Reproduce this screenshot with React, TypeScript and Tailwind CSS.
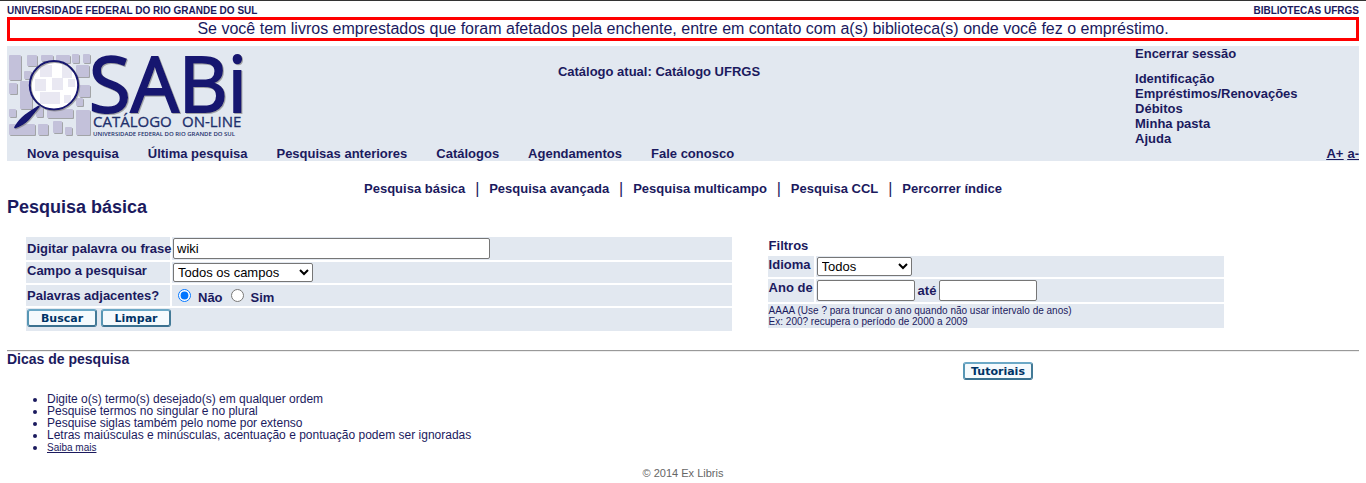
import { useState } from "react";

const mainLinks = [
  "Nova pesquisa",
  "Última pesquisa",
  "Pesquisas anteriores",
  "Catálogos",
  "Agendamentos",
  "Fale conosco",
];

const userLinks = ["Identificação", "Empréstimos/Renovações", "Débitos", "Minha pasta", "Ajuda"];

const searchModes = [
  "Pesquisa básica",
  "Pesquisa avançada",
  "Pesquisa multicampo",
  "Pesquisa CCL",
  "Percorrer índice",
];

const tips = [
  "Digite o(s) termo(s) desejado(s) em qualquer ordem",
  "Pesquise termos no singular e no plural",
  "Pesquise siglas também pelo nome por extenso",
  "Letras maiúsculas e minúsculas, acentuação e pontuação podem ser ignoradas",
];

// x, y, width, height
const tiles = [
  [2, 5, 12, 25],
  [20, 5, 10, 11],
  [34, 5, 12, 6],
  [49, 5, 14, 8],
  [65, 4, 7, 9],
  [76, 4, 7, 9],
  [69, 15, 13, 12],
  [17, 21, 7, 8],
  [2, 33, 8, 11],
  [13, 31, 12, 28],
  [72, 35, 11, 12],
  [69, 48, 7, 8],
  [2, 59, 7, 8],
  [29, 57, 7, 10],
  [40, 59, 26, 9],
  [2, 74, 26, 11],
  [31, 74, 10, 11],
  [46, 71, 9, 12],
  [58, 77, 7, 8],
  [69, 60, 14, 25],
];

const lensTiles = [
  [33, 15, 12, 12],
  [55, 14, 10, 14],
  [28, 29, 11, 12],
  [45, 28, 11, 12],
  [61, 29, 7, 8],
  [33, 42, 20, 12],
  [57, 45, 7, 8],
];

function Logo() {
  return (
    <svg className="font-normal" width="240" height="90" viewBox="0 0 240 90" role="img" aria-label="SABi">
      <filter id="shadow">
        <feDropShadow dx="1" dy="1" stdDeviation="0.7" floodColor="#777" floodOpacity="0.6" />
      </filter>
      <g fill="#c3c1da" filter="url(#shadow)">
        {tiles.map(([x, y, w, h], i) => (
          <rect key={i} x={x} y={y} width={w} height={h} rx="1" />
        ))}
      </g>
      <circle cx="47" cy="35.3" r="24.2" fill="#fff" />
      <g fill="#e9e8f2">
        {lensTiles.map(([x, y, w, h], i) => (
          <rect key={i} x={x} y={y} width={w} height={h} />
        ))}
      </g>
      <g filter="url(#shadow)">
        <circle cx="47" cy="35.3" r="24.2" fill="none" stroke="#14136f" strokeWidth="2" />
        <path d="M31.5 55.5 L33 56.5 Q27 64 22 70 Q16 76 8 78.5 Q6.500 78 7.500 76.500 Q12 69 18 64.500 Q25 59.500 31.500 55.500Z" fill="#14136f" />
        <text x="82" y="62" fontFamily="'Open Sans', sans-serif" fontSize="76" fill="#14136f" stroke="#14136f" strokeWidth="2">
          SABi
        </text>
      </g>
      <g fontFamily="'Open Sans', sans-serif" fill="#1d2f6b">
        <text x="86" y="77" fontSize="15" stroke="#1d2f6b" strokeWidth="0.3">CATÁLOGO</text>
        <text x="175" y="77" fontSize="15" stroke="#1d2f6b" strokeWidth="0.3">ON-LINE</text>
        <text x="86" y="86" fontSize="6" fontWeight="600">UNIVERSIDADE FEDERAL DO RIO GRANDE DO SUL</text>
      </g>
    </svg>
  );
}

function ImageButton({ label, type = "button", onClick }: { label: string; type?: "button" | "submit"; onClick?: () => void }) {
  return (
    <button
      type={type}
      onClick={onClick}
      className="h-[18px] w-[70px] rounded-[3px] border-2 border-t-[#6ba8c6] border-l-[#5796b4] border-r-[#437a97] border-b-[#3b7190] bg-[#f5fafd] font-['DejaVu_Sans',sans-serif] text-[11px] leading-[13px] font-bold text-[#003366]"
    >
      {label}
    </button>
  );
}

export default function App() {
  const [query, setQuery] = useState("wiki");
  const [adjacent, setAdjacent] = useState("N");

  return (
    <div className="border-t border-[#333] bg-white px-[7px] font-['Liberation_Sans',Arial,sans-serif] text-[13px] leading-[15px] text-[#1b1a5e]">
      <div className="flex justify-between pt-1 text-[10px] leading-3 font-bold">
        <span>UNIVERSIDADE FEDERAL DO RIO GRANDE DO SUL</span>
        <span>BIBLIOTECAS UFRGS</span>
      </div>
      <p className="border-3 border-[#f00] text-center text-base leading-[18px]">
        Se você tem livros emprestados que foram afetados pela enchente, entre em contato com a(s) biblioteca(s) onde você fez o empréstimo.
      </p>

      <header className="mt-[5px] bg-[#e2e8f0] font-bold">
        <div className="flex h-[100px]">
          <div className="flex-1 pt-1">
            <Logo />
          </div>
          <p className="pt-[18px] pr-12">Catálogo atual: Catálogo UFRGS</p>
          <div className="flex flex-1 justify-end">
            <ul className="w-[224px]">
              <li className="mb-[10px]"><a href="#">Encerrar sessão</a></li>
              {userLinks.map((link) => (
                <li key={link}><a href="#">{link}</a></li>
              ))}
            </ul>
          </div>
        </div>
        <div className="flex justify-between">
          <nav className="flex gap-[29px] pl-5">
            {mainLinks.map((link) => (
              <a key={link} href="#">{link}</a>
            ))}
          </nav>
          <div className="flex gap-1 underline">
            <a href="#">A+</a>
            <a href="#">a-</a>
          </div>
        </div>
      </header>

      <nav className="mt-5 flex justify-center font-bold">
        {searchModes.map((mode, i) => (
          <div key={mode} className="flex">
            {i > 0 && <span className="w-6 text-center text-base leading-[15px] font-normal">|</span>}
            <a href="#">{mode}</a>
          </div>
        ))}
      </nav>
      <h1 className="text-lg leading-[22px] font-bold">Pesquisa básica</h1>

      <form className="mt-[19px] grid grid-cols-[55%_45%] font-bold" onSubmit={(e) => e.preventDefault()}>
        <div className="mx-[19px] grid grid-cols-[144px_1fr] content-start gap-0.5">
          <label htmlFor="query" className="bg-[#e2e8f0] py-1 pl-px whitespace-nowrap">Digitar palavra ou frase</label>
          <div className="flex bg-[#e2e8f0] p-px">
            <input
              id="query"
              value={query}
              onChange={(e) => setQuery(e.target.value)}
              className="h-[21px] w-[317px] rounded-xs border border-[#767676] bg-white px-[3px] font-normal text-black"
            />
          </div>
          <label htmlFor="field" className="bg-[#e2e8f0] pt-px pl-px">Campo a pesquisar</label>
          <div className="flex bg-[#e2e8f0] p-px">
            <select id="field" className="h-[19px] w-[140px] rounded-xs border border-[#767676] bg-white font-normal text-black">
              <option>Todos os campos</option>
            </select>
          </div>
          <span id="adjacent" className="bg-[#e2e8f0] pt-[3px] pl-px">Palavras adjacentes?</span>
          <div role="radiogroup" aria-labelledby="adjacent" className="flex h-[21px] items-center gap-[7px] bg-[#e2e8f0] pl-1.5">
            <input id="adj-n" type="radio" name="adj" className="size-[13px]" checked={adjacent === "N"} onChange={() => setAdjacent("N")} />
            <label htmlFor="adj-n" className="pt-1">Não</label>
            <input id="adj-s" type="radio" name="adj" className="ml-px size-[13px]" checked={adjacent === "Y"} onChange={() => setAdjacent("Y")} />
            <label htmlFor="adj-s" className="pt-1">Sim</label>
          </div>
          <div className="col-span-2 flex h-[23px] gap-1 bg-[#e2e8f0] p-px">
            <ImageButton label="Buscar" type="submit" />
            <ImageButton label="Limpar" onClick={() => setQuery("")} />
          </div>
        </div>

        <div className="ml-[17px] grid w-3/4 grid-cols-[46px_1fr] content-start gap-0.5">
          <h2 className="col-span-2 p-px">Filtros</h2>
          <label htmlFor="language" className="bg-[#e2e8f0] pt-px pl-px">Idioma</label>
          <div className="flex bg-[#e2e8f0] p-px">
            <select id="language" className="h-[19px] w-[95px] rounded-xs border border-[#767676] bg-white font-normal text-black">
              <option>Todos</option>
            </select>
          </div>
          <label htmlFor="year-from" className="bg-[#e2e8f0] pt-px pl-px whitespace-nowrap">Ano de</label>
          <div className="flex items-center gap-[3px] bg-[#e2e8f0] p-px">
            <input id="year-from" className="h-[21px] w-[98px] rounded-xs border border-[#767676] bg-white px-[3px] font-normal text-black" />
            <label htmlFor="year-to">até</label>
            <input id="year-to" className="h-[21px] w-[98px] rounded-xs border border-[#767676] bg-white px-[3px] font-normal text-black" />
          </div>
          <p className="col-span-2 bg-[#e2e8f0] p-px text-[10px] leading-[11px] font-normal">
            AAAA (Use ? para truncar o ano quando não usar intervalo de anos)
            <br />
            Ex: 200? recupera o período de 2000 a 2009
          </p>
        </div>
      </form>

      <hr className="mt-[19px] border-t border-b border-t-[#999] border-b-[#eee]" />
      <section className="grid grid-cols-[630px_1fr]">
        <div>
          <h2 className="text-sm leading-[15px] font-bold">Dicas de pesquisa</h2>
          <ul className="mt-[26px] list-disc pl-10 text-xs leading-3">
            {tips.map((tip) => (
              <li key={tip}>{tip}</li>
            ))}
            <li><a href="#" className="text-[10px] underline">Saiba mais</a></li>
          </ul>
        </div>
        <div className="flex justify-center pt-[10px]">
          <ImageButton label="Tutoriais" />
        </div>
      </section>

      <footer className="mt-3 text-center text-[11px] leading-[14px] text-[#666]">© 2014 Ex Libris</footer>
    </div>
  );
}
